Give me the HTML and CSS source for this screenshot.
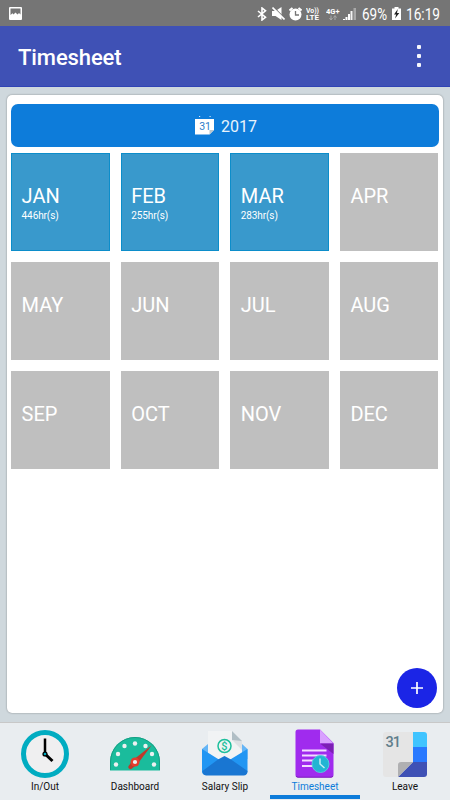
FILE: index.html
```html
<!DOCTYPE html>
<html lang="en">
<head>
    <meta charset="UTF-8">
    <meta name="viewport" content="width=device-width, initial-scale=1.0">
    <title>Timesheet</title>
    <link rel="stylesheet" href="styles.css">
</head>
<body>
<div id="wrap">
    <div class="status">
        <svg class="photo" width="13" height="13" viewBox="0 0 13 13">
            <rect width="13" height="13" rx="1" fill="#fff"/>
            <path d="M1.500 1.500h10v6l-1.500-1.500-1.500 1.500-2-2L4.500 7.500 3.500 6.300l-2 1.700z" fill="#757575"/>
        </svg>
        <div class="statusIcons">
            <svg class="bluetooth" width="10" height="14" viewBox="0 0 10 14">
                <path d="M1 4l7.500 6.200L5 13V1l3.500 2.800L1 10" fill="none" stroke="#fff" stroke-width="1.600"/>
            </svg>
            <svg width="13" height="13" viewBox="0 0 13 13">
                <path d="M0 4h3.500L9.500 0v13L3.500 9H0z" fill="#fff"/>
                <path d="M1.500 0l12 12" stroke="#757575" stroke-width="1.200"/>
                <path d="M.5 .5l12 12" stroke="#fff" stroke-width="1.600"/>
            </svg>
            <svg width="13" height="14" viewBox="0 0 13 14">
                <circle cx="6.500" cy="7.500" r="6" fill="#fff"/>
                <path d="M.5 3.500l3-2.500M12.500 3.500l-3-2.500" stroke="#fff" stroke-width="2"/>
                <path d="M6.500 4v4H10" fill="none" stroke="#757575" stroke-width="1.300"/>
            </svg>
            <svg class="netText" width="14" height="15" viewBox="0 0 14 15">
                <text x="0" y="6.500" font-size="7" textLength="13" lengthAdjust="spacingAndGlyphs">Vo))</text>
                <text x="0" y="14" font-size="8" textLength="13" lengthAdjust="spacingAndGlyphs">LTE</text>
            </svg>
            <svg class="netText net4g" width="14" height="14" viewBox="0 0 14 14">
                <text x="0" y="6.500" font-size="7.500" textLength="13.500" lengthAdjust="spacingAndGlyphs">4G+</text>
                <path d="M5 8.500v4M3.500 11l1.500 2 1.500-2M9 13V9M7.500 10.500L9 8.500l1.500 2" fill="none" stroke="#aaa" stroke-width="1"/>
            </svg>
            <svg class="signal" width="13" height="13" viewBox="0 0 13 13">
                <path d="M0 12h2v1H0zM2.500 10h2v3h-2zM5 7h2v6H5z" fill="#fff"/>
                <path d="M7.500 4h2v9h-2z" fill="#f4f4f4"/>
                <path d="M10.500 1H13v12h-2.500z" fill="#a8a8a8"/>
            </svg>
            <svg class="bigText" width="26" height="22" viewBox="0 0 26 22">
                <text x="0" y="16.500" font-size="16.500" textLength="25" lengthAdjust="spacingAndGlyphs">69%</text>
            </svg>
            <svg class="battery" width="9" height="13" viewBox="0 0 9 13">
                <path d="M0 1.500h2.500V0h4v1.500H9V13H0z" fill="#fff"/>
                <path d="M5.800 2L2 7.500h2.200L3 11.500 7.300 6H5z" fill="#222"/>
            </svg>
            <svg class="bigText clockText" width="35" height="22" viewBox="0 0 35 22">
                <text x="0" y="16.500" font-size="16.500" textLength="34" lengthAdjust="spacingAndGlyphs">16:19</text>
            </svg>
        </div>
    </div>

    <div class="header">
        <h1>Timesheet</h1>
        <div class="more"><i></i><i></i><i></i></div>
    </div>

    <div class="content">
        <div class="card">
            <div class="year">
                <svg width="19" height="20" viewBox="0 0 19 20">
                    <path d="M0 3h19v11l-4.500 4.500H0z" fill="#fff"/>
                    <path d="M19 14l-4.500 4.500V14z" fill="#bcc6cc"/>
                    <path d="M4 .5h1.200M14.500 .5h1.200" stroke="#cfe4f8" stroke-width="1"/>
                    <text x="4.200" y="14.300" class="calNub">31</text>
                </svg>
                <span>2017</span>
            </div>
            <div class="months">
                <div class="month on"><b>JAN</b><span>446hr(s)</span></div>
                <div class="month on"><b>FEB</b><span>255hr(s)</span></div>
                <div class="month on"><b>MAR</b><span>283hr(s)</span></div>
                <div class="month"><b>APR</b></div>
                <div class="month"><b>MAY</b></div>
                <div class="month"><b>JUN</b></div>
                <div class="month"><b>JUL</b></div>
                <div class="month"><b>AUG</b></div>
                <div class="month"><b>SEP</b></div>
                <div class="month"><b>OCT</b></div>
                <div class="month"><b>NOV</b></div>
                <div class="month"><b>DEC</b></div>
            </div>
            <div class="add">
                <svg width="14" height="14" viewBox="0 0 14 14">
                    <path d="M7 1v12M1 7h12" stroke="#fff" stroke-width="1.700"/>
                </svg>
            </div>
        </div>
    </div>

    <div class="tabs">
        <div class="tab">
            <svg width="50" height="50" viewBox="0 0 50 50">
                <circle cx="25" cy="25" r="21.500" fill="#efeff0" stroke="#00acc1" stroke-width="5"/>
                <path d="M25 25V9.500" stroke="#000" stroke-width="2.500"/>
                <path d="M25 25l7.500 7" stroke="#000" stroke-width="3"/>
                <circle cx="25" cy="25" r="2.600" fill="#000"/>
                <circle cx="25" cy="25" r="1.300" fill="#00acc1"/>
            </svg>
            <span>In/Out</span>
        </div>
        <div class="tab">
            <svg width="50" height="50" viewBox="0 0 50 50">
                <path d="M0 41.500V33a25 25 0 0 1 50 0v8.500z" fill="#1abc9c"/>
                <path d="M.5 41V33a24.500 24.500 0 0 1 49 0v8" fill="none" stroke="#159f84" stroke-width="1"/>
                <g fill="#ecf0f1">
                    <circle cx="6" cy="35.500" r="2.200"/>
                    <circle cx="8" cy="25" r="2.200"/>
                    <circle cx="14.500" cy="17" r="2.200"/>
                    <circle cx="25" cy="14.500" r="2.200"/>
                    <circle cx="35.500" cy="17" r="2.200"/>
                    <circle cx="42" cy="25" r="2.200"/>
                    <circle cx="44" cy="35.500" r="2.200"/>
                </g>
                <path d="M41.500 16.500L27.500 35 22 39.500a2 2 0 0 1-3-3L23 31z" fill="#c0392b"/>
                <circle cx="25" cy="33" r="4.500" fill="#e43d2e"/>
                <circle cx="25" cy="33" r="2.100" fill="#ecf0f1"/>
            </svg>
            <span>Dashboard</span>
        </div>
        <div class="tab">
            <svg width="50" height="50" viewBox="0 0 50 50">
                <path d="M2 20l6-5h34l5.500 5v10h-45z" fill="#64b5f6"/>
                <path d="M8 2h24l10 10v25H8z" fill="#f1f3f4"/>
                <path d="M32 2l10 10v3L32 11z" fill="#b0bec5"/>
                <path d="M32 11l10 10v-9z" fill="#dde1e4"/>
                <circle cx="24.500" cy="17" r="6.500" fill="none" stroke="#1dbf9c" stroke-width="1.500"/>
                <text x="24.500" y="21" class="dollar">$</text>
                <path d="M2 20l22.500 14L47.500 20v22a5 5 0 0 1-2.500 4H5a4 4 0 0 1-3-4z" fill="#2196f3"/>
                <path d="M2.500 42L18 30.500l6.500-3.500 6.500 3.500L47.500 42a4 4 0 0 1-4 4.500H6a4 4 0 0 1-3.500-4.500z" fill="#1976d2"/>
            </svg>
            <span>Salary Slip</span>
        </div>
        <div class="tab active">
            <svg width="50" height="50" viewBox="0 0 50 50">
                <path d="M8 .5h22L43.500 14v32a2.500 2.500 0 0 1-2.500 2.500H8A2.500 2.500 0 0 1 5.500 46V3A2.500 2.500 0 0 1 8 .5z" fill="#a02bee"/>
                <path d="M6 47a2.500 2.500 0 0 0 2 1.200h33a2.500 2.500 0 0 0 2-1.200" fill="none" stroke="#7e22bd" stroke-width="1"/>
                <path d="M30 .5L43.500 14.500H30z" fill="#d9a0ff"/>
                <path d="M30 14.500h13.500V25z" fill="#7c1fb5"/>
                <path d="M12 21.500h24.500M12 26.500h24.500M12 31.500h14M12 37h14" stroke="#f3ddff" stroke-width="2"/>
                <circle cx="30.500" cy="35" r="8.500" fill="#22b5d3" stroke="#56c9dd" stroke-width="1"/>
                <path d="M30 29.500V35l4.500 4" fill="none" stroke="#c4eef5" stroke-width="1.500"/>
            </svg>
            <span>Timesheet</span>
        </div>
        <div class="tab">
            <svg width="50" height="50" viewBox="0 0 50 50">
                <path d="M6 3h27v30L18 48H6a3 3 0 0 1-3-3V6a3 3 0 0 1 3-3z" fill="#e5e5e5"/>
                <path d="M33 3h11a3 3 0 0 1 3 3v12H33z" fill="#40c4ff"/>
                <path d="M33 18h14v15H33z" fill="#2979ff"/>
                <path d="M33 33h14v12a3 3 0 0 1-3 3H18z" fill="#3f51b5"/>
                <path d="M21 33h12L18 48V36a3 3 0 0 1 3-3z" fill="#b0b0b2"/>
                <text x="5.500" y="17.500" class="leaveNub">31</text>
            </svg>
            <span>Leave</span>
        </div>
    </div>
</div>
</body>
</html>
```
FILE: styles.css
```css
* {
    box-sizing: border-box;
}
body {
    margin: 0;
    font-family: Roboto, "Liberation Sans", sans-serif;
}
#wrap {
    display: flex;
    flex-direction: column;
    width: 450px;
    height: 800px;
    background: #cfd8dd;
    overflow: hidden;
}
svg {
    display: block;
    flex: none;
}

/* status bar */
.status {
    display: flex;
    justify-content: space-between;
    align-items: center;
    height: 26px;
    padding: 0 9px;
    background: #757575;
}
.statusIcons {
    display: flex;
    align-items: center;
    gap: 4px;
    padding-top: 1px;
}
.bluetooth {
    margin-right: 1px;
}
.netText {
    fill: #fff;
    font-weight: 700;
}
.net4g {
    margin-left: 2px;
}
.signal {
    margin-left: -1px;
}
.bigText {
    fill: #fff;
    margin-left: 2px;
    overflow: visible;
}
.clockText {
    margin-left: 1px;
}

/* title bar */
.header {
    display: flex;
    justify-content: space-between;
    align-items: center;
    height: 61px;
    padding: 3px 29px 0 18px;
    background: #3f51b5;
    border-bottom: 1px solid #3044b5;
}
.header h1 {
    margin: 0;
    font-size: 22px;
    font-weight: 500;
    line-height: 30px;
    letter-spacing: -.1px;
    color: #fff;
}
.more {
    display: flex;
    flex-direction: column;
    gap: 5px;
    padding-bottom: 4px;
}
.more i {
    width: 4px;
    height: 4px;
    border-radius: 1px;
    background: #f5f6fc;
}

.content {
    flex: 1;
    padding: 8px 7px 9px;
}
.card {
    position: relative;
    height: 618px;
    padding: 9px 4px;
    background: #fff;
    border-radius: 5px;
    box-shadow: 0 0 2px rgba(0, 0, 0, .4);
}
.year {
    display: flex;
    justify-content: center;
    align-items: center;
    gap: 7px;
    height: 43px;
    margin-bottom: 6px;
    padding: 1px 0 0 2px;
    border-radius: 7px;
    background: #0d7cda;
    color: #e8f3fc;
    font-size: 16px;
}
.calNub {
    font-size: 10.5px;
    fill: #2b7cc9;
}
.months {
    display: grid;
    grid-template-columns: repeat(4, 98.600px);
    grid-auto-rows: 98px;
    column-gap: 11px;
    row-gap: 11.200px;
}
.month {
    padding: 30px 0 0 10.600px;
    background: #bfbfbf;
    color: #fff;
}
.month.on {
    background: #3999cc;
    border: 1px solid #0c8dca;
    padding: 29px 0 0 9.600px;
}
.month b {
    display: block;
    font-size: 20px;
    font-weight: 400;
    line-height: 26px;
}
.month span {
    display: block;
    font-size: 10px;
    line-height: 13px;
    letter-spacing: -.1px;
}
.add {
    position: absolute;
    right: 6px;
    bottom: 5px;
    display: flex;
    justify-content: center;
    align-items: center;
    width: 40px;
    height: 40px;
    border-radius: 50%;
    background: #1b25e6;
}

/* bottom tabs */
.tabs {
    display: flex;
    height: 78px;
    background: #e9edf0;
    border-top: 1px solid #c8c8c8;
}
.tab {
    display: flex;
    flex-direction: column;
    align-items: center;
    width: 90px;
    padding-top: 6px;
    color: #111;
    font-size: 10px;
}
.tab span {
    line-height: 14px;
    margin-top: 1px;
}
.active {
    color: #0d7cda;
    border-bottom: 4px solid #0d7cda;
    margin-bottom: 1px;
}
.dollar {
    font-size: 11px;
    font-weight: 500;
    text-anchor: middle;
    fill: #1dbf9c;
}
.leaveNub {
    font-size: 14.5px;
    letter-spacing: -1px;
    font-weight: 500;
    fill: #607d8b;
}
```
